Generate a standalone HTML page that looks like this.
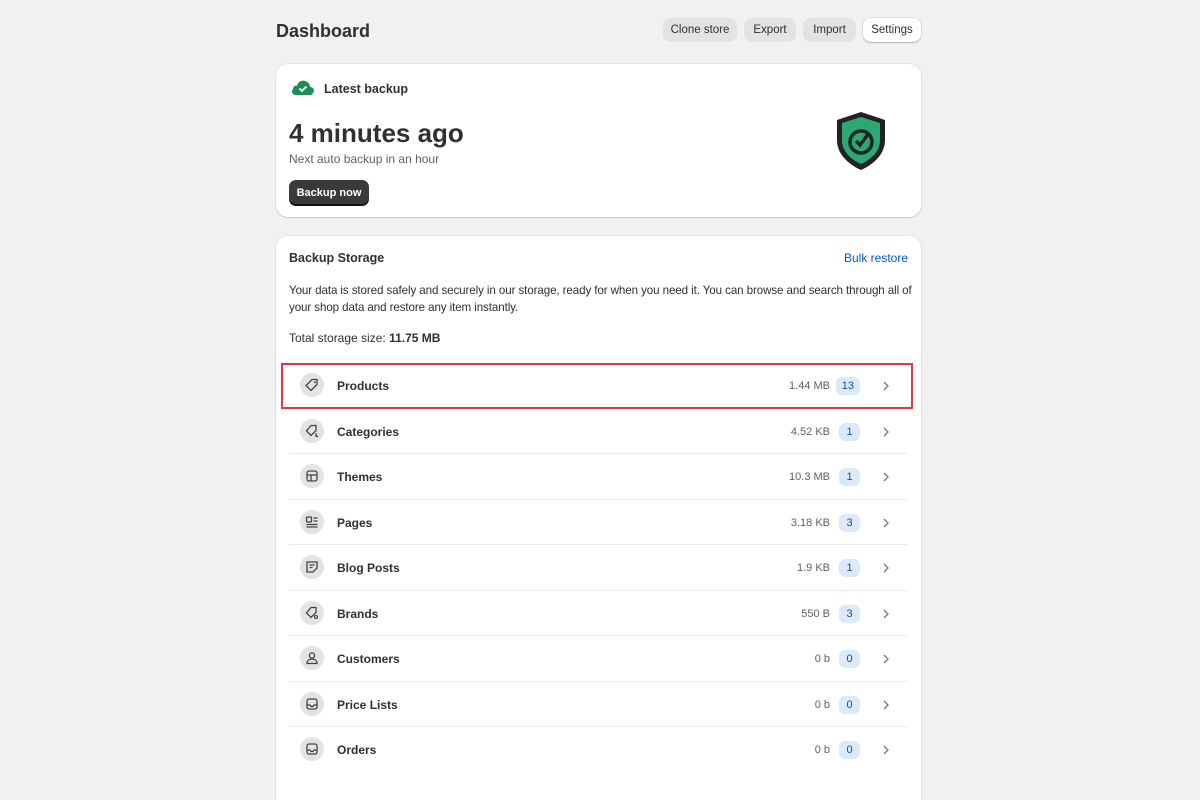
<!DOCTYPE html>
<html><head><meta charset="utf-8"><style>
*{box-sizing:border-box;margin:0;padding:0}
html{overflow:hidden;width:1200px;height:800px}
body{width:1200px;height:800px;overflow:hidden;background:#f1f1f1;font-family:"Liberation Sans",sans-serif;color:#303030;position:relative}
.abs{position:absolute}
.btn{position:absolute;top:18px;height:24px;border-radius:8px;background:#e3e3e3;font-size:11.5px;line-height:25px;text-align:center;color:#303030}
.card{position:absolute;left:276px;width:645px;background:#fff;border-radius:12px;box-shadow:0 1px 1px rgba(0,0,0,.12),0 0 0 1px rgba(0,0,0,.05)}
.row{position:absolute;left:289px;width:619px;height:45.5px;border-bottom:1px solid #ebebeb}
.row .ic{position:absolute;left:11px;top:10px;width:24px;height:24px;border-radius:50%;background:#e3e3e3}
.row .ic svg{position:absolute;left:5px;top:5px}
.row .nm{position:absolute;left:48px;top:16px;font-size:12px;font-weight:bold}
.row .sz{position:absolute;right:78px;top:17px;font-size:11px;color:#616161}
.row .bd{position:absolute;right:48px;top:14px;height:18px;min-width:21px;padding:0 6px;border-radius:6px;background:#dbeafb;color:#1d4f7a;font-size:11px;line-height:18px;text-align:center}
.row .ch{position:absolute;right:18px;top:18px}
</style></head><body>
<div class="abs" style="left:276px;top:21px;font-size:18px;font-weight:bold">Dashboard</div>
<div class="btn" style="left:663px;width:74px">Clone store</div>
<div class="btn" style="left:744px;width:52px">Export</div>
<div class="btn" style="left:803px;width:53px">Import</div>
<div class="btn" style="left:863px;width:58px;background:#fff;box-shadow:0 1px 1px rgba(0,0,0,.2),0 0 0 1px rgba(0,0,0,.08)">Settings</div>

<div class="card" style="top:64px;height:153px">
<svg class="abs" style="left:15px;top:14px" width="24" height="18" viewBox="0 0 24 18"><path d="M5 17 C1 17 0 13 2 11 C2 8 5 7 6 8 C7 3 12 1 16 4 C18 5 19 7 19 9 C23 9 24 13 22 15 C21 17 20 17 19 17Z" fill="#1a8f5a"/><path d="M8.5 10.5 l2.5 2.5 l4.5-4.5" stroke="#fff" stroke-width="1.8" fill="none"/></svg>
<div class="abs" style="left:48px;top:18px;font-size:12.5px;font-weight:bold">Latest backup</div>
<div class="abs" style="left:13px;top:54px;font-size:26px;font-weight:bold">4 minutes ago</div>
<div class="abs" style="left:13px;top:88px;font-size:12px;color:#616161">Next auto backup in an hour</div>
<div class="abs" style="left:13px;top:116px;width:80px;height:24px;border-radius:7px;background:#3a3a3a;color:#fff;font-size:11px;font-weight:bold;line-height:26px;text-align:center;box-shadow:0 2px 0 #111">Backup now</div>
<svg class="abs" style="left:558px;top:46px" width="54" height="62" viewBox="0 0 54 62"><path d="M27 2 L51 10 L51 30 C51 44 40 54 27 60 C14 54 3 44 3 30 L3 10Z" fill="#222"/><path d="M27 7 L46 13 L46 30 C46 41 38 49 27 54 C16 49 8 41 8 30 L8 13Z" fill="#2aa876"/><circle cx="27" cy="32" r="11" fill="none" stroke="#222" stroke-width="3.5"/><path d="M22 31 l4 4 l9-12" stroke="#222" stroke-width="3.5" fill="none"/></svg>
</div>

<div class="card" style="top:236px;height:580px">
<div class="abs" style="left:13px;top:15px;font-size:12.5px;font-weight:bold">Backup Storage</div>
<div class="abs" style="right:13px;top:15px;font-size:12px;color:#005bd3">Bulk restore</div>
<div class="abs" style="left:13px;top:46px;width:625px;font-size:11.6px;line-height:17px;letter-spacing:-0.1px">Your data is stored safely and securely in our storage, ready for when you need it. You can browse and search through all of your shop data and restore any item instantly.</div>
<div class="abs" style="left:13px;top:95px;font-size:12px">Total storage size: <b>11.75 MB</b></div>
</div>

<div class="row" style="top:363px"><div class="ic"><svg width="14" height="14" viewBox="0 0 14 14"><path d="M7 1.5h5v5l-6 6-5-5z" fill="none" stroke="#444" stroke-width="1.3"/><circle cx="9.8" cy="4.2" r="0.9" fill="#444"/></svg></div><div class="nm">Products</div><div class="sz">1.44 MB</div><div class="bd">13</div><svg class="ch" width="8" height="10"><path d="M2 1l4 4-4 4" stroke="#777" stroke-width="1.3" fill="none"/></svg></div>
<div class="row" style="top:408.5px"><div class="ic"><svg width="14" height="14" viewBox="0 0 14 14"><path d="M6 1.5h5v5l-5 5-4.5-4.5z" fill="none" stroke="#444" stroke-width="1.3"/><path d="M11 9v4M11 11l2 2" stroke="#444" stroke-width="1.2"/></svg></div><div class="nm">Categories</div><div class="sz">4.52 KB</div><div class="bd">1</div><svg class="ch" width="8" height="10"><path d="M2 1l4 4-4 4" stroke="#777" stroke-width="1.3" fill="none"/></svg></div>
<div class="row" style="top:454px"><div class="ic"><svg width="14" height="14" viewBox="0 0 14 14"><rect x="2" y="2" width="10" height="10" rx="2" fill="none" stroke="#444" stroke-width="1.3"/><path d="M2 6h10M6 6v6" stroke="#444" stroke-width="1.3"/></svg></div><div class="nm">Themes</div><div class="sz">10.3 MB</div><div class="bd">1</div><svg class="ch" width="8" height="10"><path d="M2 1l4 4-4 4" stroke="#777" stroke-width="1.3" fill="none"/></svg></div>
<div class="row" style="top:499.5px"><div class="ic"><svg width="14" height="14" viewBox="0 0 14 14"><rect x="1.5" y="2" width="5" height="5" rx="1" fill="none" stroke="#444" stroke-width="1.3"/><path d="M8.5 3h4M8.5 6h4M1.5 9.5h11M1.5 12h11" stroke="#444" stroke-width="1.3"/></svg></div><div class="nm">Pages</div><div class="sz">3.18 KB</div><div class="bd">3</div><svg class="ch" width="8" height="10"><path d="M2 1l4 4-4 4" stroke="#777" stroke-width="1.3" fill="none"/></svg></div>
<div class="row" style="top:545px"><div class="ic"><svg width="14" height="14" viewBox="0 0 14 14"><path d="M2 2h10v6l-4 4H2z" fill="none" stroke="#444" stroke-width="1.3"/><path d="M4.5 5h5M4.5 7.5h3" stroke="#444" stroke-width="1.3"/></svg></div><div class="nm">Blog Posts</div><div class="sz">1.9 KB</div><div class="bd">1</div><svg class="ch" width="8" height="10"><path d="M2 1l4 4-4 4" stroke="#777" stroke-width="1.3" fill="none"/></svg></div>
<div class="row" style="top:590.5px"><div class="ic"><svg width="14" height="14" viewBox="0 0 14 14"><path d="M6 1.5h5v5l-5 5-4.5-4.5z" fill="none" stroke="#444" stroke-width="1.3"/><circle cx="11" cy="11" r="1.5" fill="none" stroke="#444" stroke-width="1.1"/></svg></div><div class="nm">Brands</div><div class="sz">550 B</div><div class="bd">3</div><svg class="ch" width="8" height="10"><path d="M2 1l4 4-4 4" stroke="#777" stroke-width="1.3" fill="none"/></svg></div>
<div class="row" style="top:636px"><div class="ic"><svg width="14" height="14" viewBox="0 0 14 14"><circle cx="7" cy="4.5" r="2.6" fill="none" stroke="#444" stroke-width="1.3"/><path d="M2 12.5c0-3 2.2-4.5 5-4.5s5 1.5 5 4.5z" fill="none" stroke="#444" stroke-width="1.3"/></svg></div><div class="nm">Customers</div><div class="sz">0 b</div><div class="bd">0</div><svg class="ch" width="8" height="10"><path d="M2 1l4 4-4 4" stroke="#777" stroke-width="1.3" fill="none"/></svg></div>
<div class="row" style="top:681.5px"><div class="ic"><svg width="14" height="14" viewBox="0 0 14 14"><rect x="2" y="2" width="10" height="10" rx="2" fill="none" stroke="#444" stroke-width="1.3"/><path d="M2 8h3l1 1.5h2l1-1.5h3" fill="none" stroke="#444" stroke-width="1.3"/></svg></div><div class="nm">Price Lists</div><div class="sz">0 b</div><div class="bd">0</div><svg class="ch" width="8" height="10"><path d="M2 1l4 4-4 4" stroke="#777" stroke-width="1.3" fill="none"/></svg></div>
<div class="row" style="top:727px;border-bottom:none"><div class="ic"><svg width="14" height="14" viewBox="0 0 14 14"><rect x="2" y="2" width="10" height="10" rx="2" fill="none" stroke="#444" stroke-width="1.3"/><path d="M2 8h3l1 1.5h2l1-1.5h3" fill="none" stroke="#444" stroke-width="1.3"/></svg></div><div class="nm">Orders</div><div class="sz">0 b</div><div class="bd">0</div><svg class="ch" width="8" height="10"><path d="M2 1l4 4-4 4" stroke="#777" stroke-width="1.3" fill="none"/></svg></div>

<div class="abs" style="left:281px;top:363px;width:632px;height:46px;border:2px solid #e0393e"></div>
</body></html>
